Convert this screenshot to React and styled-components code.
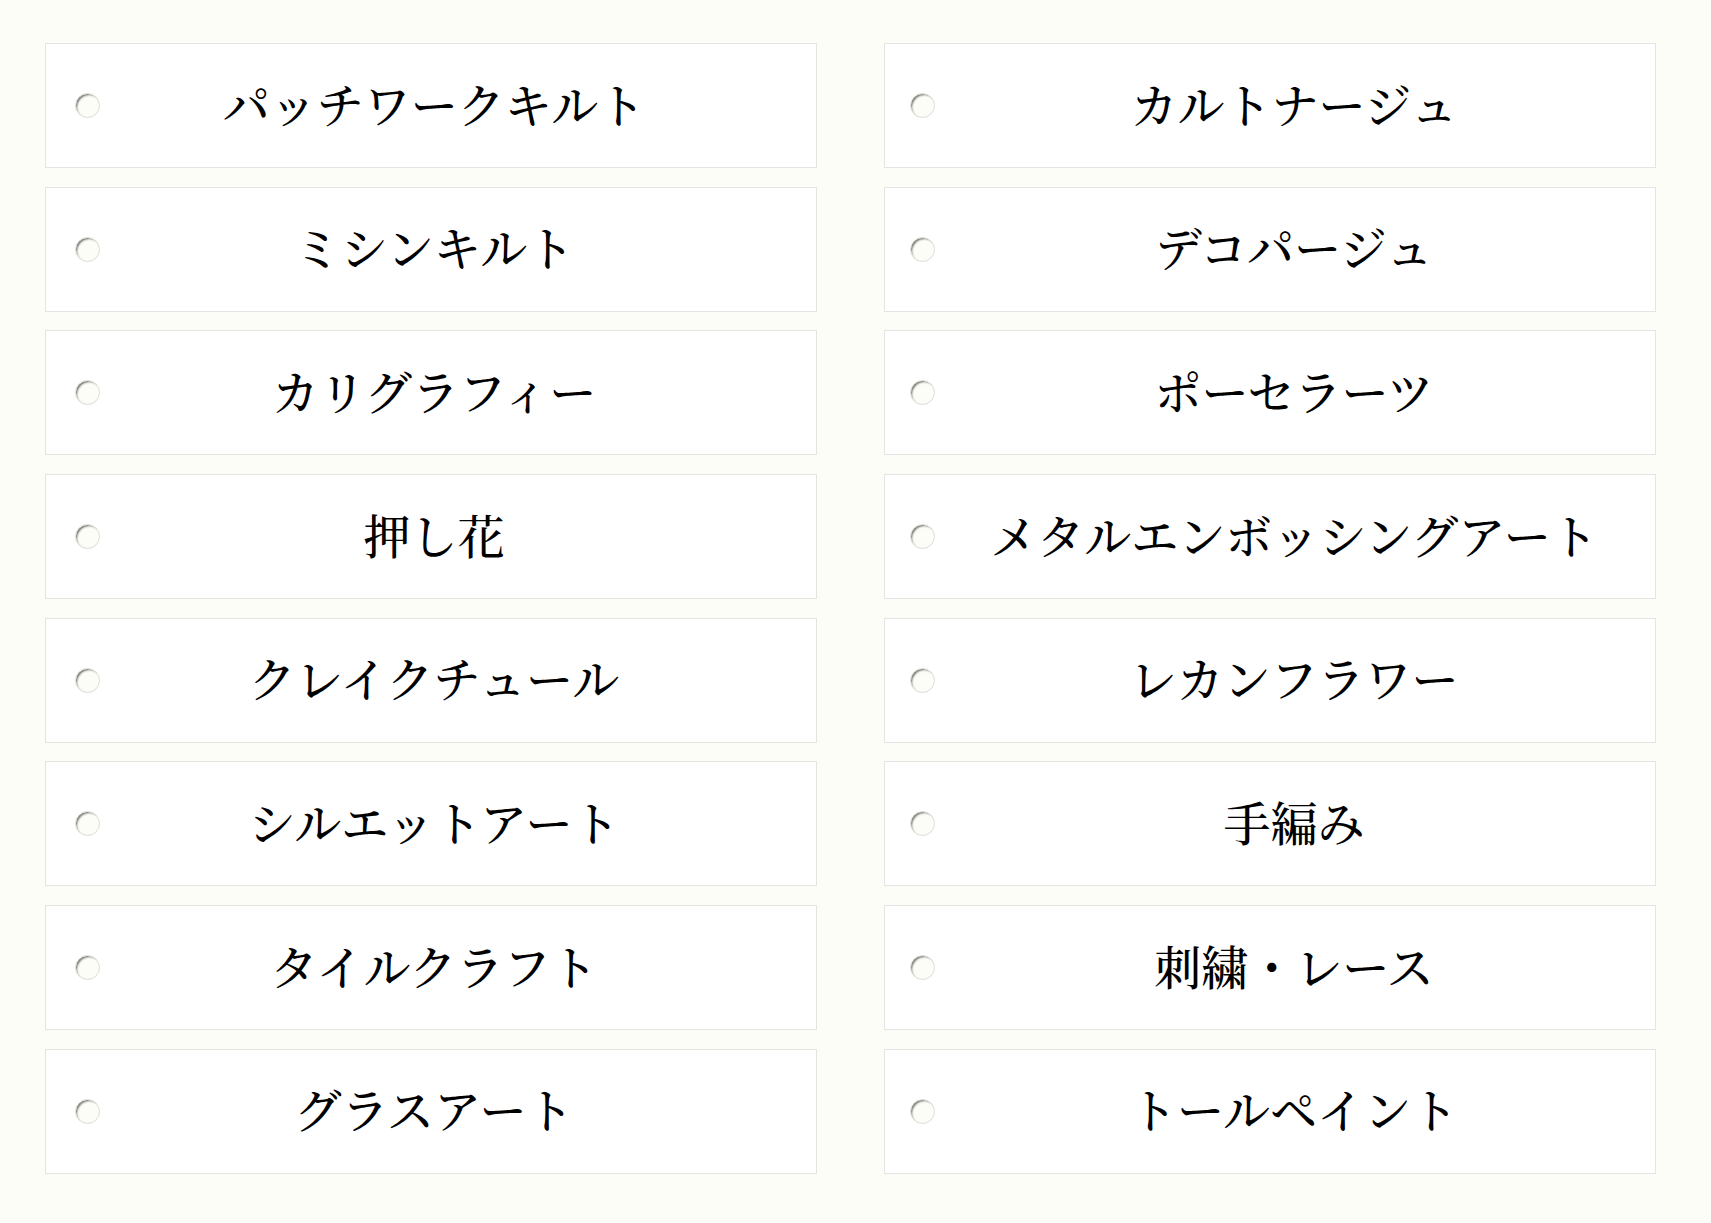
import React from "react"
import styled, { createGlobalStyle } from "styled-components"

const crafts = [
	["パッチワークキルト", "カルトナージュ"],
	["ミシンキルト", "デコパージュ"],
	["カリグラフィー", "ポーセラーツ"],
	["押し花", "メタルエンボッシングアート"],
	["クレイクチュール", "レカンフラワー"],
	["シルエットアート", "手編み"],
	["タイルクラフト", "刺繍・レース"],
	["グラスアート", "トールペイント"],
]

const GlobalStyle = createGlobalStyle`
	html, body {
		margin: 0;
		padding: 0;
		background: #fdfdf8;
	}
	body {
		font-family: "Noto Serif CJK JP", serif;
	}
`

const App = () => {
	return (
		<>
			<GlobalStyle />
			<Page>
				<Grid>
					{crafts.map(([left, right]) => (
						<React.Fragment key={left}>
							<Option>
								<Radio type="radio" name="craft" value={left} />
								<Label>{left}</Label>
							</Option>
							<Option $right>
								<Radio type="radio" name="craft" value={right} $right />
								<Label>{right}</Label>
							</Option>
						</React.Fragment>
					))}
				</Grid>
			</Page>
		</>
	)
}

const Page = styled.main`
	padding: 43px 0 50px 45px;
`

const Grid = styled.div`
	display: grid;
	grid-template-columns: 772px 772px;
	column-gap: 67px;
	row-gap: 18.7px;
`

const Option = styled.label`
	display: grid;
	grid-template-columns: ${(p) => (p.$right ? "105px minmax(0, 1fr) 57px" : "105px minmax(0, 1fr) 99px")};
	align-items: center;
	height: 125px;
	box-sizing: border-box;
	background: #ffffff;
	border: 1px solid #e4e4e2;
	cursor: pointer;
`

const Radio = styled.input`
	appearance: none;
	margin: 0 0 0 ${(p) => (p.$right ? "25px" : "29px")};
	width: 25px;
	height: 25px;
	border-radius: 50%;
	border: 1px solid #dcdcd8;
	background: #fdfdf7;
	box-shadow: inset 2px 2px 2px -1px rgba(0, 0, 0, 0.55);
	box-sizing: border-box;
	cursor: pointer;
`

const Label = styled.span`
	font-size: 47px;
	font-weight: 500;
	color: #000;
	text-align: center;
	white-space: nowrap;
	padding-bottom: 7px;
`

export default App
